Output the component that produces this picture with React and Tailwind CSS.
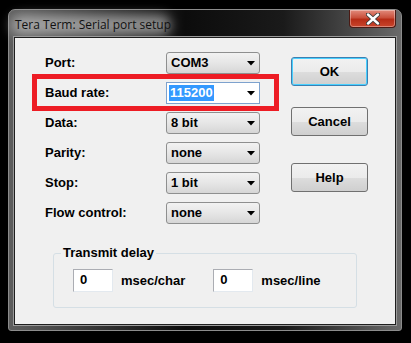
import React from 'react';

const font = { fontFamily: '"Liberation Sans", Arial, sans-serif' };

const Arrow = () => (
  <svg width="8" height="5" viewBox="0 0 8 5" className="ml-auto mr-[4px]">
    <path d="M0 0H8L4 4.5Z" fill="#000" />
  </svg>
);

const Combo = ({ value }) => (
  <div className="flex items-center w-[94px] h-[22px] rounded-[3px] border border-[#8e8f8f] bg-gradient-to-b from-[#f2f2f2] via-[#e6e6e6] to-[#d6d6d6] pl-[4px] text-[13px] font-bold text-black">
    <span>{value}</span>
    <Arrow />
  </div>
);

const Button = ({ label, def }) => (
  <div
    className={`flex items-center justify-center w-[77px] h-[29px] rounded-[3px] border text-[13px] font-bold text-black bg-[linear-gradient(#f2f2f2_0%,#ebebeb_50%,#dddddd_51%,#cfcfcf_100%)] ${
      def ? 'border-[#3c7fb1] shadow-[inset_0_0_0_1px_#48d0ff]' : 'border-[#707070]'
    }`}
  >
    {label}
  </div>
);

const rows = [
  ['Port:', 'COM3'],
  ['Baud rate:', '115200'],
  ['Data:', '8 bit'],
  ['Parity:', 'none'],
  ['Stop:', '1 bit'],
  ['Flow control:', 'none'],
];

export default function App() {
  return (
    <div className="w-[411px] h-[343px] bg-black overflow-hidden pt-[9px] pl-[8px]" style={font}>
      {/* window frame */}
      <div className="w-[394px] h-[322px] rounded-t-[7px] rounded-b-[3px] border border-[#8c8c8c] bg-[linear-gradient(90deg,#5e5e5e_0%,#3a3a3a_20%,#0c0c0c_45%,#1a1a1a_70%,#6a6a6a_100%)] flex flex-col">
        {/* title bar */}
        <div className="h-[27px] flex items-start relative">
          <div className="absolute left-[2px] top-[5px] w-[160px] h-[20px] rounded-full bg-[#d8d8d8] opacity-60 blur-[6px]" />
          <span className="relative mt-[6px] ml-[6px] text-[12px] text-[#111]" style={{ fontFamily: '"Open Sans", "Liberation Sans", sans-serif' }}>
            Tera Term: Serial port setup
          </span>
          <div className="relative ml-auto mr-[5px] w-[47px] h-[18px] rounded-b-[4px] border border-t-0 border-[#4a1a14] bg-[linear-gradient(#e28b7c_0%,#c9503c_45%,#b62c16_55%,#c9452c_100%)] flex items-center justify-center shadow-[inset_0_0_0_1px_rgba(255,255,255,0.35)]">
            <svg width="14" height="12" viewBox="0 0 14 12">
              <path d="M2 1.5L12 10.5M12 1.5L2 10.5" stroke="#3b3b3b" strokeWidth="4.2" strokeLinecap="round" />
              <path d="M2 1.5L12 10.5M12 1.5L2 10.5" stroke="#fff" strokeWidth="2.4" strokeLinecap="round" />
            </svg>
          </div>
        </div>

        {/* client area */}
        <div className="mx-[5px] h-[288px] border border-[#1e1e1e] shadow-[0_0_0_1px_#9a9a9a] bg-[#f0f0f0] relative text-black">
          <div className="flex pt-[14px]">
            {/* fields */}
            <div className="grid grid-cols-[121px_94px] gap-y-[8px] pl-[30px] items-center">
              {rows.map(([label, value]) => (
                <React.Fragment key={label}>
                  <span className="text-[13px] font-bold">{label}</span>
                  {label === 'Baud rate:' ? (
                    <div className="flex items-center w-[94px] h-[22px] border border-[#7da2ce] bg-white pl-[2px] text-[13px] font-bold">
                      <span className="bg-[#3399ff] text-white px-[1px] leading-[16px]">{value}</span>
                      <Arrow />
                    </div>
                  ) : (
                    <Combo value={value} />
                  )}
                </React.Fragment>
              ))}
            </div>

            {/* buttons */}
            <div className="flex flex-col gap-[21px] ml-[31px] pt-[5px]">
              <Button label="OK" def />
              <Button label="Cancel" />
              <div className="mt-[6px]">
                <Button label="Help" />
              </div>
            </div>
          </div>

          {/* transmit delay group */}
          <div className="relative ml-[38px] mt-[29px] w-[304px] h-[55px] border border-[#d5dfe5] rounded-[3px]">
            <span className="absolute -top-[10px] left-[7px] bg-[#f0f0f0] px-[2px] text-[13px] font-bold leading-[18px]">
              Transmit delay
            </span>
            <div className="flex items-center pt-[15px] pl-[19px] text-[13px] font-bold">
              <div className="w-[40px] h-[23px] bg-white border border-[#abadb3] border-b-[#e3e9ef] border-r-[#e3e9ef] pl-[6px] leading-[20px]">0</div>
              <span className="ml-[8px]">msec/char</span>
              <div className="ml-[28px] w-[40px] h-[23px] bg-white border border-[#abadb3] border-b-[#e3e9ef] border-r-[#e3e9ef] pl-[6px] leading-[20px]">0</div>
              <span className="ml-[8px]">msec/line</span>
            </div>
          </div>

          {/* red highlight */}
          <div className="absolute left-[17px] top-[36px] w-[247px] h-[37px] border-[5px] border-[#ed1c24]" />
        </div>
      </div>
    </div>
  );
}
